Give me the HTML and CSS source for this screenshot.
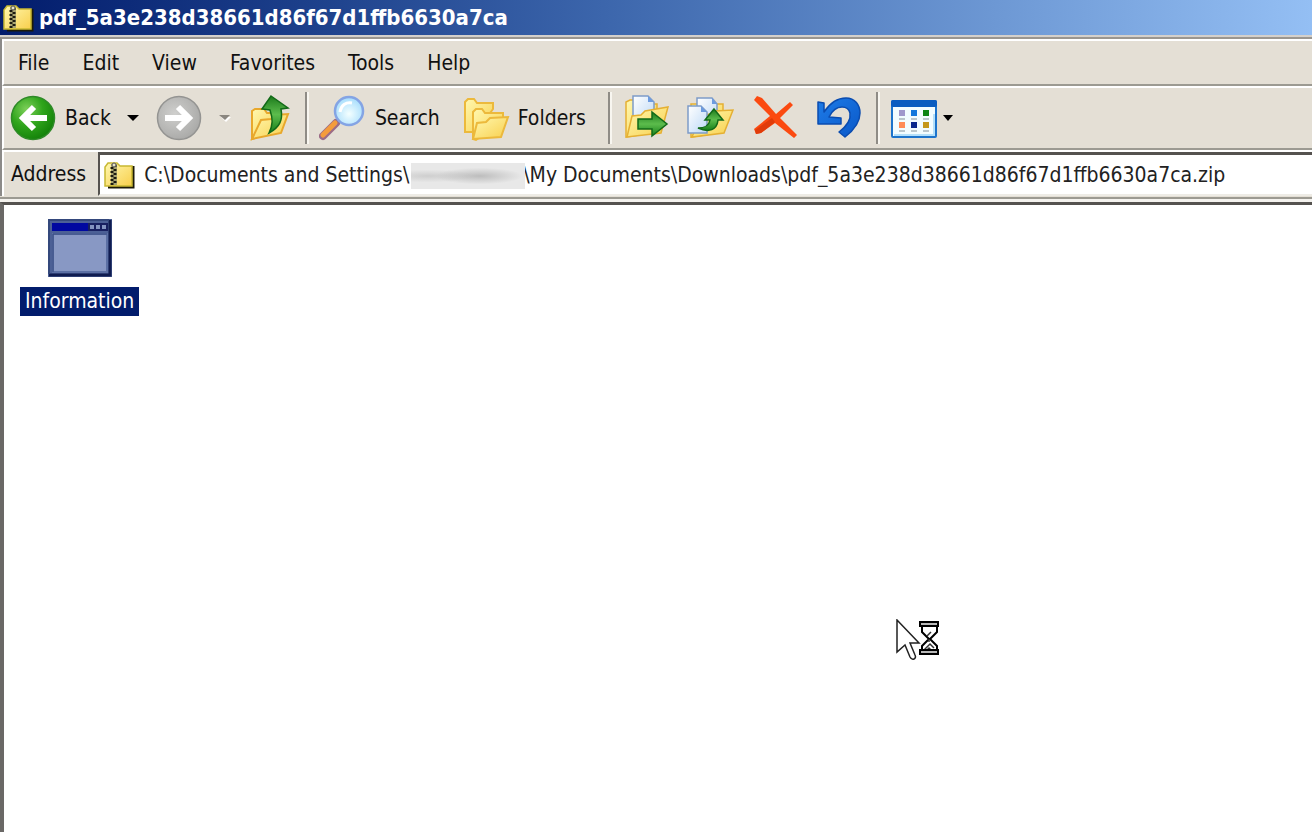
FILE: index.html
```html
<!DOCTYPE html>
<html lang="en">
<head>
  <meta charset="UTF-8" />
  <title>pdf_5a3e238d38661d86f67d1ffb6630a7ca</title>
  <link rel="stylesheet" href="styles.css">
</head>
<body>
  <!-- shared icons -->
  <svg class="defs" aria-hidden="true">
    <defs>
      <linearGradient id="yellow" x1="0" y1="0" x2="1" y2="1">
        <stop offset="0" stop-color="#fff8b0" />
        <stop offset="1" stop-color="#f8cf4c" />
      </linearGradient>
      <linearGradient id="green" x1="0" y1="0" x2="0" y2="1">
        <stop offset="0" stop-color="#1c7a1c" />
        <stop offset="0.5" stop-color="#5cbc4c" />
        <stop offset="1" stop-color="#17801a" />
      </linearGradient>
      <linearGradient id="paper" x1="0" y1="0" x2="1" y2="1">
        <stop offset="0" stop-color="#ffffff" />
        <stop offset="1" stop-color="#bcd8f6" />
      </linearGradient>
      <radialGradient id="ball" cx="0.35" cy="0.3" r="0.75">
        <stop offset="0" stop-color="#7ed05a" />
        <stop offset="0.5" stop-color="#30a51c" />
        <stop offset="1" stop-color="#128008" />
      </radialGradient>
      <radialGradient id="ballOff" cx="0.4" cy="0.4" r="0.65">
        <stop offset="0" stop-color="#cfcfcd" />
        <stop offset="1" stop-color="#a9a9a7" />
      </radialGradient>
      <radialGradient id="lens" cx="0.5" cy="0.6" r="0.6">
        <stop offset="0" stop-color="#f4ffff" />
        <stop offset="1" stop-color="#a4dcfc" />
      </radialGradient>
      <linearGradient id="blue" x1="0" y1="0" x2="1" y2="1">
        <stop offset="0" stop-color="#1e7ce8" />
        <stop offset="1" stop-color="#0a58c8" />
      </linearGradient>
      <symbol id="zip" viewBox="0 0 32 28">
        <path d="M4 26h25V5" fill="none" stroke="#1c1a08" stroke-width="3" />
        <path d="M1 25V6l3-4h9l3 3h12v20z" fill="url(#yellow)" stroke="#c8b832" stroke-width="1.5" />
        <path d="M10 3v21" stroke="#a8a470" stroke-width="6" />
        <path d="M8 6v18" stroke="#1b1a10" stroke-width="3" stroke-dasharray="2 2" />
        <path d="M11 4v20" stroke="#1b1a10" stroke-width="3" stroke-dasharray="2 2" />
        <circle cx="10" cy="4" r="2" fill="#e6e4c8" stroke="#555" />
      </symbol>
    </defs>
  </svg>

  <div class="window">
    <header class="titlebar">
      <svg class="zip"><use href="#zip" /></svg>
      <h1>pdf_5a3e238d38661d86f67d1ffb6630a7ca</h1>
    </header>

    <div class="bars">
      <nav class="menubar">
        <button>File</button>
        <button>Edit</button>
        <button>View</button>
        <button>Favorites</button>
        <button>Tools</button>
        <button>Help</button>
      </nav>

      <div class="toolbar">
        <div class="group">
          <button>
            <svg class="icon" viewBox="0 0 48 48">
              <circle cx="24" cy="24" r="21.5" fill="url(#ball)" stroke="#2f8a28" stroke-width="1.5" />
              <path d="M38 24H15M25 13L14 24l11 11" fill="none" stroke="#fff" stroke-width="6" />
            </svg>
            Back
          </button>
          <button aria-label="Back history"><svg class="caret" viewBox="0 0 12 8"><path d="M0 1h12L6 7z" /></svg></button>
          <button disabled aria-label="Forward">
            <svg class="icon" viewBox="0 0 48 48">
              <circle cx="24" cy="24" r="21.5" fill="url(#ballOff)" stroke="#949492" stroke-width="1.5" />
              <path d="M10 24h23M23 13l11 11-11 11" fill="none" stroke="#fff" stroke-width="6" />
            </svg>
          </button>
          <button disabled aria-label="Forward history"><svg class="caret" viewBox="0 0 12 8"><path d="M2 3h10L7 8z" fill="#fff" /><path d="M0 1h11L6 6z" fill="#8b8780" /></svg></button>
          <button aria-label="Up">
            <svg class="icon" viewBox="0 0 48 48">
              <path d="M5 45V17l3-2h9l3 4h12v14z" fill="url(#yellow)" stroke="#e8a82c" stroke-width="2" />
              <path d="M5 45l9-19 10-1 3-4 14-1-7 19z" fill="url(#yellow)" stroke="#e8a82c" stroke-width="2" />
              <path d="M24 2l17 12-7 1c2 11-1 18-12 24 4-8 4-14 1-23l-8-1z" fill="url(#green)" stroke="#126a18" stroke-width="1.5" />
            </svg>
          </button>
        </div>

        <div class="group wide">
          <button>
            <svg class="icon" viewBox="0 0 48 48">
              <path d="M17 29L4 42" stroke="#9c6c86" stroke-width="8" stroke-linecap="round" />
              <path d="M16 29L4 41" stroke="#f49c3c" stroke-width="5" stroke-linecap="round" />
              <circle cx="30" cy="17" r="14" fill="url(#lens)" stroke="#84a4e4" stroke-width="2.5" />
              <path d="M21 18c1-7 6-10 12-9" fill="none" stroke="#fff" stroke-width="3" />
            </svg>
            Search
          </button>
          <button>
            <svg class="icon" viewBox="0 0 48 48">
              <path d="M3 38V8l3-3h6l3 4h16v6L14 38z" fill="url(#yellow)" stroke="#ecb93c" stroke-width="2" />
              <path d="M11 45V18l3-3h6l3 4h18v8L14 46z" fill="url(#yellow)" stroke="#ecb93c" stroke-width="2" />
              <path d="M11 45l4-16 9-1 4-4 18-1-7 20z" fill="url(#yellow)" stroke="#ecb93c" stroke-width="2" />
            </svg>
            Folders
          </button>
        </div>

        <div class="group">
          <button aria-label="Move to">
            <svg class="icon" viewBox="0 0 48 48">
              <path d="M4 43V8l4-2h6l3 4h18v28z" fill="url(#yellow)" stroke="#e5b033" stroke-width="1.5" />
              <path d="M11 28V2h15l6 6v18z" fill="url(#paper)" stroke="#7e9cc8" stroke-width="1.5" />
              <path d="M26 2v6h6z" fill="#6c9be0" />
              <path d="M5 43l5-21 9-1 4-4 23-4-7 26z" fill="url(#yellow)" stroke="#e5b033" stroke-width="1.5" />
              <path d="M16 25h14v-7l15 12-15 12v-7H16z" fill="url(#green)" stroke="#126a18" stroke-width="1.5" />
            </svg>
          </button>
          <button aria-label="Copy to">
            <svg class="icon" viewBox="0 0 48 48">
              <path d="M5 43V10h32v28z" fill="url(#yellow)" stroke="#e5b033" stroke-width="1.5" />
              <path d="M11 28V4h15l5 6v20z" fill="url(#paper)" stroke="#7e9cc8" stroke-width="1.5" />
              <path d="M26 4v6h5z" fill="#6c9be0" />
              <path d="M6 43l9-22 10-1 4-3 18-1-9 23z" fill="url(#yellow)" stroke="#e5b033" stroke-width="1.5" />
              <path d="M2 39V12h13l6 6v21z" fill="url(#paper)" stroke="#7e9cc8" stroke-width="1.5" />
              <path d="M15 12v6h6z" fill="#6c9be0" />
              <path d="M28 15l9 11h-5c-1 10-9 13-20 8 7 0 11-2 12-8h-5z" fill="url(#green)" stroke="#126a18" stroke-width="1.5" />
            </svg>
          </button>
          <button aria-label="Delete">
            <svg class="icon" viewBox="0 0 48 48">
              <path d="M4 6l3-4 5 2 14 16L40 8l3 3-13 13 17 17-3 3-19-15L11 39l-5 1-2-5 16-13z" fill="#fb4a10" />
              <path d="M5 36l17-12 3 4L11 39l-5 1z" fill="#e03c0a" />
            </svg>
          </button>
          <button aria-label="Undo">
            <svg class="icon" viewBox="0 0 48 48">
              <path d="M4 30V8l6 1v9C16 9 24 4 32 4c9 0 14 7 14 15 0 9-6 17-15 24l-6-5c8-6 12-13 11-19-1-4-4-6-8-6-5 0-10 4-13 10l12 1v6z" fill="url(#blue)" stroke="#0a4cb0" stroke-width="1.5" stroke-linejoin="round" />
            </svg>
          </button>
        </div>

        <div class="group tight">
          <button aria-label="Views">
            <svg class="icon" viewBox="0 0 48 48">
              <rect x="2" y="7" width="44" height="36" rx="1" fill="#f2fcff" stroke="#1c74cc" stroke-width="2" />
              <path d="M4 41h40V20" fill="none" stroke="#b4e0fa" stroke-width="2" />
              <rect x="1" y="6" width="46" height="7" rx="2" fill="#0a5cc0" />
              <path d="M9 16h6v6H9z" fill="#a098cc" />
              <path d="M21 16h6v6h-6z" fill="#1478dc" />
              <path d="M33 16h6v6h-6z" fill="#0c8414" />
              <path d="M9 28h6v6H9z" fill="#ff8c58" />
              <path d="M21 28h6v6h-6z" fill="#08288c" />
              <path d="M33 28h6v6h-6z" fill="#c4981c" />
              <path d="M9 25h6M21 25h6M33 25h6M9 37h6M21 37h6M33 37h6" stroke="#a8b4bc" stroke-width="1.5" />
            </svg>
          </button>
          <button aria-label="Views list"><svg class="caret" viewBox="0 0 12 8"><path d="M1 1h10L6 7z" /></svg></button>
        </div>
      </div>

      <div class="addressbar">
        <label for="address">Address</label>
        <div class="field">
          <svg class="zip"><use href="#zip" /></svg>
          <input id="address" type="text" spellcheck="false" value="C:\Documents and Settings\                   \My Documents\Downloads\pdf_5a3e238d38661d86f67d1ffb6630a7ca.zip" />
          <span class="redacted"></span>
        </div>
      </div>
    </div>

    <main class="files">
      <a class="file" href="#">
        <svg class="program" viewBox="0 0 64 58">
          <path d="M0 0h64v58H0z" fill="#4c6096" />
          <path d="M1 56h61V1" fill="none" stroke="#101c50" stroke-width="3" />
          <path d="M1 55V1h60" fill="none" stroke="#34487c" stroke-width="2" />
          <path d="M4 4h56v8H4z" fill="#0008a0" />
          <path d="M40 4h20v8H40z" fill="#182060" />
          <path d="M42 6h4v4h-4zM48 6h4v4h-4zM54 6h4v4h-4z" fill="#8494c0" />
          <path d="M5 15h54v38H5z" fill="#8898c4" stroke="#5c70a4" stroke-width="2" />
          <path d="M5 53V15h54" fill="none" stroke="#344880" stroke-width="1" />
        </svg>
        <span>Information</span>
      </a>

      <svg class="cursor" viewBox="0 0 46 44">
        <path d="M2 1v32l8-7 5 12c2 4 7 2 5-2l-5-12h9z" fill="#fff" stroke="#222" stroke-width="1.5" />
        <path d="M27 7v6l7 7-7 7v6h15v-6l-7-7 7-7V7z" fill="#fff" stroke="#000" stroke-width="2" />
        <path d="M32 17l4-4M34 20v3M29 31l2-2 2-2 2-2 2 2 2 2M32 31l2-2 2 2" stroke="#333" stroke-width="1.5" fill="none" />
        <path d="M25 3h18v4H25zM25 31h18v4H25z" fill="#b8b8b8" stroke="#000" stroke-width="2" />
      </svg>
    </main>
  </div>
</body>
</html>
```
FILE: styles.css
```css
* {
  box-sizing: border-box;
}
body {
  margin: 0;
  font-family: 'DejaVu Sans Condensed', 'DejaVu Sans', sans-serif;
  font-size: 21px;
  color: #111;
  background: #e4dfd5;
}
button {
  display: flex;
  align-items: center;
  gap: 8px;
  padding: 0;
  border: none;
  background: none;
  font: inherit;
  color: inherit;
}
svg {
  display: block;
  flex: none;
}
.defs {
  position: absolute;
  width: 0;
  height: 0;
}
.window {
  display: flex;
  flex-direction: column;
  gap: 6px;
  min-height: 100vh;
}
.zip {
  width: 32px;
  height: 28px;
}

/* title bar */
.titlebar {
  display: flex;
  align-items: center;
  gap: 4px;
  height: 37px;
  margin-bottom: -6px;
  padding: 0 3px;
  background: linear-gradient(90deg, #021c6c, #1c3f8a 23%, #3c66ac 46%, #6d98d4 76%, #94bff4);
  border-bottom: 2px solid #d4d0cb;
}
.titlebar h1 {
  margin: 0;
  font-size: 22px;
  color: #fff;
}

/* menu, buttons and address */
.bars {
  border-top: 2px solid #9a9690;
  border-left: 2px solid #8c8a88;
}
.menubar,
.toolbar,
.addressbar {
  display: flex;
  border-top: 2px solid #fff;
  border-left: 2px solid #fff;
}
.menubar {
  gap: 33px;
  height: 47px;
  padding: 0 14px;
  border-bottom: 2px solid #9c9a92;
}
.toolbar {
  align-items: center;
  height: 64px;
  padding: 0 5px;
  border-bottom: 2px solid #9c9a92;
}
.group {
  display: flex;
  align-items: center;
  gap: 16px;
}
.group + .group {
  height: 52px;
  margin-left: 10px;
  padding-left: 12px;
  border-left: 2px solid #8f8c86;
  box-shadow: inset 2px 0 #f8f6f0;
}
.group.wide {
  gap: 22px;
  padding-right: 12px;
}
.group.tight {
  gap: 4px;
  margin-left: 14px;
}
.icon {
  width: 48px;
  height: 48px;
}
.caret {
  width: 12px;
  height: 8px;
}
.addressbar {
  align-items: stretch;
  height: 46px;
}
.addressbar label {
  display: flex;
  align-items: center;
  padding: 0 12px 0 7px;
}
.field {
  position: relative;
  display: flex;
  flex: 1;
  align-items: center;
  gap: 8px;
  padding-left: 4px;
  background: #fff;
  border-top: 3px solid #55524f;
  border-left: 2px solid #55524f;
  border-bottom: 2px solid #eeece6;
}
.field input {
  flex: 1;
  min-width: 0;
  padding: 0;
  border: none;
  outline: none;
  background: none;
  font: inherit;
  color: #222;
}
/* hidden user name */
.redacted {
  position: absolute;
  left: 311px;
  top: 8px;
  width: 114px;
  height: 26px;
  background:
    radial-gradient(ellipse at 60% 50%, rgba(170, 170, 170, 0.7), transparent 45%),
    radial-gradient(ellipse at 15% 50%, rgba(195, 195, 195, 0.7), transparent 35%),
    #e8e8e8;
}

/* folder contents */
.files {
  position: relative;
  flex: 1;
  padding: 14px 16px;
  background: #fff;
  border-top: 3px solid #55524f;
  border-left: 4px solid #6a6866;
  box-shadow: 0 -3px #f4f2ee, 0 -5px #9c9a92;
}
.file {
  display: inline-flex;
  flex-direction: column;
  align-items: center;
  gap: 10px;
  color: #fff;
  text-decoration: none;
}
.file span {
  padding: 0 5px;
  line-height: 29px;
  background: #021c6c;
}
.program {
  width: 64px;
  height: 58px;
}
.cursor {
  position: absolute;
  left: 891px;
  top: 414px;
  width: 46px;
  height: 44px;
}
```
